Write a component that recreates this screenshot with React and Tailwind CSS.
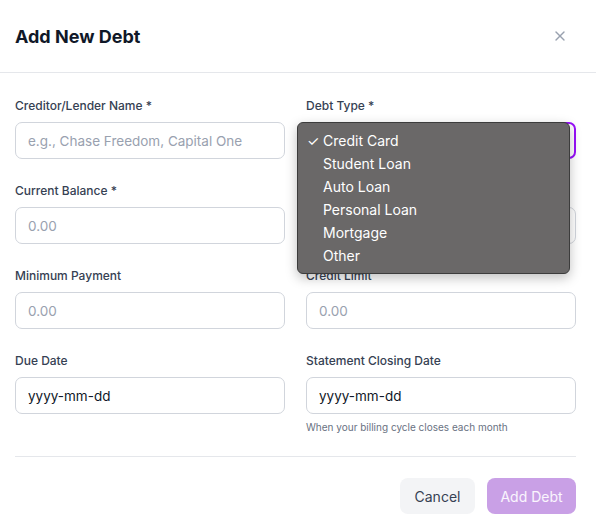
import { X } from 'lucide-react';

const FONT = { fontFamily: 'Inter, "Noto Sans", sans-serif' };

const debtTypes = ['Credit Card', 'Student Loan', 'Auto Loan', 'Personal Loan', 'Mortgage', 'Other'];

function Field({ label, placeholder, value, hint }) {
  return (
    <div>
      <label className="block h-4 text-[12px] leading-4 font-medium text-gray-700 mb-2">{label}</label>
      <input
        readOnly
        placeholder={placeholder}
        defaultValue={value}
        className="w-full h-[37px] px-3 rounded-[7px] border border-gray-300 bg-white text-[13.5px] text-gray-900 placeholder:text-gray-400 outline-none"
      />
      {hint && <p className="mt-[7px] text-[10px] leading-3 text-gray-500">{hint}</p>}
    </div>
  );
}

export default function App() {
  return (
    <div className="relative w-[596px] h-[527px] bg-white overflow-hidden" style={FONT}>
      {/* Header */}
      <div className="flex items-center justify-between h-[73px] pl-[15px] pr-[28px] border-b border-gray-200">
        <h2 className="text-[18px] font-bold text-gray-900">Add New Debt</h2>
        <X className="w-4 h-4 text-gray-400" strokeWidth={2} />
      </div>

      {/* Body */}
      <div className="pl-[15px] pr-[20px] pt-[25px]">
        <div className="grid grid-cols-2 gap-x-[21px] gap-y-[24px]">
          <Field label="Creditor/Lender Name *" placeholder="e.g., Chase Freedom, Capital One" />
          <div>
            <label className="block h-4 text-[12px] leading-4 font-medium text-gray-700 mb-2">Debt Type *</label>
            {/* the open list covers the select's value */}
            <div className="w-full h-[37px] px-3 rounded-[7px] border-2 border-purple-600 bg-white flex items-center justify-end">
              <span className="text-[9px] text-gray-800">▾</span>
            </div>
          </div>
          <Field label="Current Balance *" placeholder="0.00" />
          <Field label="" placeholder="" />
          <Field label="Minimum Payment" placeholder="0.00" />
          <Field label="Credit Limit" placeholder="0.00" />
          <Field label="Due Date" value="yyyy-mm-dd" />
          <Field label="Statement Closing Date" value="yyyy-mm-dd" hint="When your billing cycle closes each month" />
        </div>

        {/* Footer */}
        <div className="mt-[23px] border-t border-gray-200 pt-[21px] flex justify-end gap-3">
          <button className="h-9 w-[75px] rounded-lg bg-gray-100 text-[14px] text-gray-700">Cancel</button>
          <button className="h-9 w-[89px] rounded-lg bg-[#c9a0e6] text-[14px] text-white/90">Add Debt</button>
        </div>
      </div>

      {/* Native select dropdown */}
      <div className="absolute left-[297px] top-[122px] w-[273px] py-[6px] rounded-[6px] border border-[#3c3c3c] bg-[#6a6868] shadow-[0_4px_12px_rgba(0,0,0,0.25)]">
        {debtTypes.map((t, i) => (
          <div key={t} className="flex items-center h-[23px] text-[14px] text-white">
            <span className="w-[25px] pl-[9px] text-[14px]">{i === 0 ? '✓' : ''}</span>
            <span>{t}</span>
          </div>
        ))}
      </div>
    </div>
  );
}
